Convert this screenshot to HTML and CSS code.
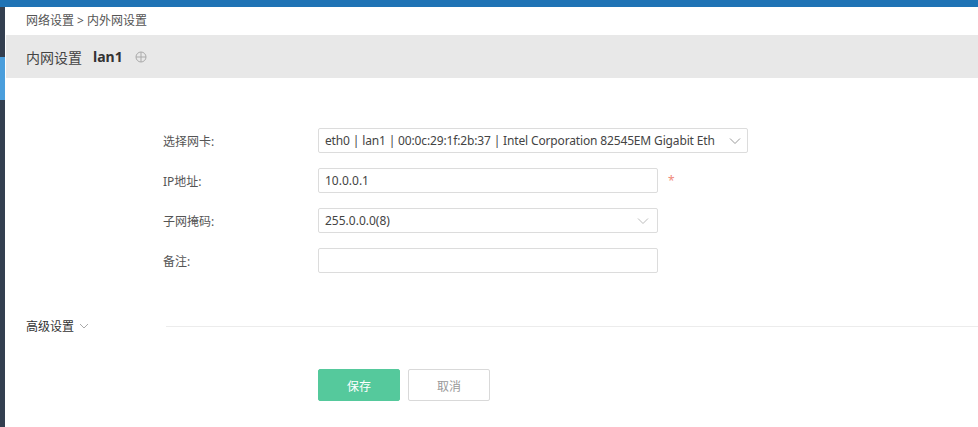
FILE: index.html
```html
<!DOCTYPE html>
<html lang="zh-CN">
<head>
<meta charset="utf-8">
<title>内外网设置</title>
<link rel="stylesheet" href="styles.css">
</head>
<body>
<div class="topbar"></div>
<div class="layout">
  <aside class="sidebar"><div class="side-active"></div></aside>
  <main class="main">
    <div class="breadcrumb">网络设置 &gt; 内外网设置</div>
    <div class="header">
      <span class="title">内网设置</span>
      <span class="name">lan1</span>
      <svg class="plus" width="12" height="12" viewBox="0 0 12 12"><circle cx="6" cy="6" r="5" fill="none" stroke="#aaa" stroke-width="1"/><path d="M1 6H11M6 1V11" stroke="#aaa" stroke-width="1"/></svg>
    </div>
    <div class="form">
      <div class="row">
        <label class="label">选择网卡:</label>
        <div class="field select wide"><span class="val tight">eth0 | lan1 | 00:0c:29:1f:2b:37 | Intel Corporation 82545EM Gigabit Eth</span><svg class="chev" width="12" height="8" viewBox="0 0 12 8"><path d="M1 1.5L6 6.5L11 1.5" fill="none" stroke="#999" stroke-width="1"/></svg></div>
      </div>
      <div class="row">
        <label class="label">IP地址:</label>
        <div class="field"><span class="val">10.0.0.1</span></div>
        <span class="req">*</span>
      </div>
      <div class="row">
        <label class="label">子网掩码:</label>
        <div class="field select"><span class="val">255.0.0.0(8)</span><svg class="chev" width="12" height="8" viewBox="0 0 12 8"><path d="M1 1.5L6 6.5L11 1.5" fill="none" stroke="#bbb" stroke-width="1"/></svg></div>
      </div>
      <div class="row">
        <label class="label">备注:</label>
        <div class="field"><span class="val"></span></div>
      </div>
    </div>
    <div class="advanced">
      <span class="adv-text">高级设置</span>
      <svg class="adv-chev" width="10" height="6" viewBox="0 0 10 6"><path d="M1 1L5 5L9 1" fill="none" stroke="#aaa" stroke-width="1"/></svg>
      <div class="adv-line"></div>
    </div>
    <div class="buttons">
      <button class="btn save">保存</button>
      <button class="btn cancel">取消</button>
    </div>
  </main>
</div>
</body>
</html>
```
FILE: styles.css
```css
* { box-sizing: border-box; }
html, body { margin: 0; padding: 0; background: #fff; }
body {
  font-family: "Noto Sans", "Noto Sans CJK SC", sans-serif;
  font-size: 12px;
  color: #333;
  height: 427px;
  overflow: hidden;
}
.topbar { height: 7px; background: #1f73b5; }
.layout { display: flex; height: 420px; }
.sidebar {
  width: 5px;
  background: #333f50;
  padding-top: 50px;
  flex: none;
}
.side-active { height: 43px; background: #4a9edc; }
.main { flex: 1; margin-left: 1px; }
.breadcrumb {
  height: 28px;
  line-height: 28px;
  padding-left: 20px;
  color: #555;
  font-size: 12px;
}
.header {
  height: 43px;
  background: #e8e8e8;
  display: flex;
  align-items: center;
  padding-left: 20px;
}
.title { font-size: 14px; color: #444; }
.name { font-size: 14px; font-weight: bold; color: #333; margin-left: 11px; }
.plus { margin-left: 12px; margin-top: 1px; }
.form { padding-top: 50px; padding-bottom: 15px; padding-left: 157px; }
.row { display: flex; align-items: center; height: 25px; margin-bottom: 15px; }
.row:last-child { margin-bottom: 0; }
.label { width: 155px; color: #555; font-size: 12px; }
.field {
  width: 340px;
  height: 25px;
  border: 1px solid #dcdcdc;
  border-radius: 2px;
  display: flex;
  align-items: center;
  padding: 0 6px;
  overflow: hidden;
  color: #444;
  font-size: 12px;
}
.field.wide { width: 430px; padding-right: 4px; }
.val { flex: 1; white-space: nowrap; }
.tight { letter-spacing: -0.15px; }
.chev { flex: none; margin-left: 4px; margin-right: 2px; }
.req { color: #f08a7a; margin-left: 10px; font-size: 12px; }
.advanced {
  display: flex;
  align-items: center;
  height: 20px;
  margin-top: 28px;
  padding-left: 20px;
}
.adv-text { color: #333; font-size: 12px; }
.adv-chev { margin-left: 5px; }
.adv-line { flex: 1; height: 1px; background: #ececec; margin-left: 77px; }
.buttons { display: flex; gap: 8px; margin-top: 33px; padding-left: 312px; }
.btn {
  width: 82px;
  height: 32px;
  border-radius: 2px;
  font-family: "Noto Sans CJK SC", sans-serif;
  font-size: 12px;
  cursor: pointer;
}
.save { background: #55c99c; border: 1px solid #55c99c; color: #fff; }
.cancel { background: #fff; border: 1px solid #d9d9d9; color: #999; }
```
